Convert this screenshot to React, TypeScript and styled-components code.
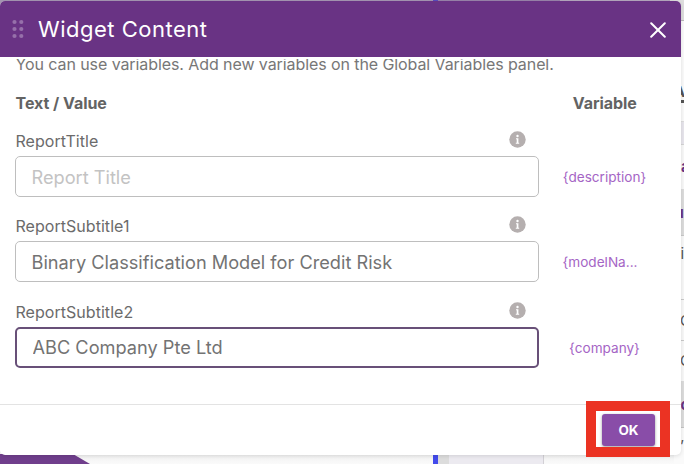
import React from "react";
import styled, { createGlobalStyle } from "styled-components";

const GlobalStyle = createGlobalStyle`
  * { box-sizing: border-box; }
  body { margin: 0; background: #fff; font-family: Inter, "Liberation Sans", sans-serif; overflow: hidden; }
`;

const Page = styled.div`
  position: relative;
  width: 684px;
  height: 464px;
  overflow: hidden;
`;

const Backdrop = styled.div`
  display: flex;
  flex-direction: column;
  justify-content: space-between;
  height: 100%;
  background: #fafafa;
`;

const TopEdge = styled.div`
  height: 12px;
  background: linear-gradient(90deg, #a697b3 0 433px, #5a4cc0 433px 438px, #9a84ab 438px 560px, #b5a8bf 560px 670px, #d8d8d8 670px);
`;

const BottomEdge = styled.div`
  display: flex;
  height: 10px;
  background: linear-gradient(#f1f1f1, #fafafa);
`;

const Shape = styled.svg`
  display: block;
  width: 433px;
  height: 10px;
`;

const Segment = styled.div<{ $w: number; $c: string }>`
  width: ${(p) => p.$w}px;
  background: ${(p) => p.$c};
`;

const SidePanel = styled.div`
  position: absolute;
  top: 0;
  right: 0;
  width: 10px;
  height: 464px;
  display: flex;
  flex-direction: column;
`;

const SideCell = styled.div<{ $h: number; $bg: string; $fg?: string; $bold?: boolean; $line?: string; $left?: number; $top?: number; $under?: boolean }>`
  height: ${(p) => p.$h}px;
  flex: none;
  display: flex;
  align-items: center;
  padding-left: ${(p) => p.$left ?? 7}px;
  padding-top: ${(p) => p.$top ?? 0}px;
  overflow: hidden;
  white-space: nowrap;
  background: ${(p) => p.$bg};
  color: ${(p) => p.$fg ?? "#555"};
  font-size: 15px;
  font-weight: ${(p) => (p.$bold ? 700 : 400)};
  text-decoration: ${(p) => (p.$under ? "underline 3px" : "none")};
  text-underline-offset: 3px;
  text-decoration-skip-ink: none;
  border-bottom: 1px solid ${(p) => p.$line ?? "transparent"};
`;

const Dialog = styled.section`
  position: absolute;
  top: 1px;
  left: 0;
  width: 681px;
  height: 454px;
  display: flex;
  flex-direction: column;
  background: #fff;
  border-radius: 5px;
  overflow: hidden;
  box-shadow: 0 1px 4px rgba(0, 0, 0, 0.12);
`;

const Header = styled.header`
  height: 56px;
  flex: none;
  display: flex;
  align-items: center;
  padding: 0 15px 0 12px;
  background: #693384;
  color: #fff;
`;

const Grip = styled.svg`
  width: 12px;
  height: 20px;
`;

const Title = styled.h1`
  flex: 1;
  margin: 0 0 0 14px;
  font-size: 22px;
  font-weight: 400;
  line-height: 28px;
  letter-spacing: 0.5px;
`;

const CloseButton = styled.button`
  width: 16px;
  height: 16px;
  padding: 0;
  margin-top: 2px;
  border: 0;
  background: none;
  svg { display: block; }
`;

const Body = styled.main`
  height: 345px;
  flex: none;
  margin-top: 2px;
  overflow: hidden;
  padding-left: 15px;
`;

const Hint = styled.p`
  margin: -6px 0 0 0.5px;
  height: 22px;
  font-size: 16px;
  line-height: 22px;
  letter-spacing: -0.085px;
  color: #777;
  white-space: nowrap;
`;

const Columns = styled.div`
  display: grid;
  grid-template-columns: 523px 133px;
`;

const HeadRow = styled(Columns)`
  margin: 17px 0 16px;
  height: 22px;
  font-size: 16px;
  font-weight: 700;
  line-height: 23px;
  letter-spacing: -0.05px;
  color: #636363;
`;

const HeadCell = styled.span<{ $center?: boolean }>`
  padding-left: 0.5px;
  text-align: ${(p) => (p.$center ? "center" : "left")};
`;

const FieldRow = styled(Columns)`
  height: 85.3px;
  align-content: start;
`;

const LabelLine = styled.div`
  height: 26px;
  display: flex;
  justify-content: space-between;
  align-items: flex-start;
  padding: 0 12px 0 0.5px;
`;

const Label = styled.label`
  font-size: 16px;
  line-height: 22px;
  letter-spacing: 0.04px;
  color: #6b6b6b;
`;

const InfoIcon = styled.svg`
  width: 17px;
  height: 17px;
  margin-top: 1px;
`;

const Field = styled.input<{ $active?: boolean }>`
  grid-column: 1;
  width: 524px;
  height: 41px;
  padding: 0 15.5px;
  border: ${(p) => (p.$active ? "2px solid #685078" : "1px solid #bebebe")};
  border-radius: 5px;
  outline: 0;
  background: #fff;
  color: #737373;
  font: 400 18.2px Inter, sans-serif;
  &::placeholder { color: #c3c3c3; opacity: 1; }
`;

const Variable = styled.span<{ $shift?: number }>`
  grid-column: 2;
  height: 41px;
  line-height: 43px;
  padding-right: ${(p) => p.$shift ?? 0}px;
  text-align: center;
  font-size: 13.6px;
  color: #a565c5;
`;

const Footer = styled.footer`
  flex: 1;
  display: flex;
  justify-content: flex-end;
  align-items: flex-start;
  padding: 9px 26px 0 0;
  border-top: 1px solid #e3e3e3;
`;

const OkButton = styled.button`
  width: 53px;
  height: 32px;
  padding: 0;
  border: 0;
  border-radius: 3px;
  background: #894da8;
  color: #fff;
  font: 700 13.5px Inter, sans-serif;
  box-shadow: 0 1px 3px rgba(0, 0, 0, 0.4);
`;

const Highlight = styled.div`
  position: absolute;
  left: 586px;
  top: 401px;
  width: 84px;
  height: 56px;
  border: 10px solid #eb3323;
`;

const rows = [
  { label: "ReportTitle", placeholder: "Report Title", value: "", variable: "{description}", shift: 0 },
  { label: "ReportSubtitle1", value: "Binary Classification Model for Credit Risk", variable: "{modelNa...", shift: 9 },
  { label: "ReportSubtitle2", value: "ABC Company Pte Ltd", variable: "{company}", active: true, shift: 0 },
];

function Info() {
  return (
    <InfoIcon viewBox="0 0 17 17">
      <circle cx="8.5" cy="8.5" r="8.2" fill="#b5afaf" />
      <circle cx="8.5" cy="5" r="1.2" fill="#fff" />
      <path d="M7 7.2h2.4v4.5h.8v1.1H6.8v-1.1h.9V8.3H7z" fill="#fff" />
    </InfoIcon>
  );
}

export default function App() {
  return (
    <>
      <GlobalStyle />
      <Page>
        <Backdrop>
          <TopEdge />
          <BottomEdge>
            <Shape viewBox="0 0 433 10">
              <path d="M0 0h73l17 10H0z" fill="#703e8c" />
            </Shape>
            <Segment $w={5} $c="#434bec" />
            <Segment $w={11} $c="#dcdcdc" />
            <Segment $w={94} $c="#eceaf0" />
            <Segment $w={1} $c="#d2d0d5" />
          </BottomEdge>
        </Backdrop>
        <SidePanel>
          <SideCell $h={21} $bg="#dedede" $line="#bbb" />
          <SideCell $h={101} $bg="#fafafa" $bold $under $left={0} $top={40} $line="#ddd">A</SideCell>
          <SideCell $h={23} $bg="#e7e5ec" $line="#d4d4d4" />
          <SideCell $h={44} $bg="#f8f8f8" $fg="#693384" $bold $left={7}>a</SideCell>
          <SideCell $h={47} $bg="#dcdcdc" $fg="#693384" $bold $left={0.5} $line="#c8c8c8">u</SideCell>
          <SideCell $h={36} $bg="#f8f8f8" $left={6.5}>ic</SideCell>
          <SideCell $h={28} $bg="#f8f8f8" $line="#c9c9c9" />
          <SideCell $h={41} $bg="#f8f8f8" $line="#c9c9c9" $left={6}>C</SideCell>
          <SideCell $h={40} $bg="#f8f8f8" $left={6}>C</SideCell>
          <SideCell $h={47} $bg="#dcdcdc" $fg="#693384" $bold $left={6.5} $line="#c4c4c4">c</SideCell>
          <SideCell $h={36} $bg="#fafafa" $left={6}>’</SideCell>
        </SidePanel>
        <Dialog>
          <Header>
            <Grip viewBox="0 0 12 20">
              {[3, 10, 17].map((y) => (
                <g key={y} fill="#9670aa">
                  <circle cx="2.5" cy={y} r="2.1" />
                  <circle cx="9.3" cy={y} r="2.1" />
                </g>
              ))}
            </Grip>
            <Title>Widget Content</Title>
            <CloseButton aria-label="Close">
              <svg width="16" height="16" viewBox="0 0 16 16">
                <path d="M1.2 1.2l13.6 13.6M14.8 1.2L1.2 14.8" stroke="#fff" strokeWidth="2" strokeLinecap="round" />
              </svg>
            </CloseButton>
          </Header>
          <Body>
            <Hint>You can use variables. Add new variables on the Global Variables panel.</Hint>
            <HeadRow>
              <HeadCell>Text / Value</HeadCell>
              <HeadCell $center>Variable</HeadCell>
            </HeadRow>
            {rows.map((r) => (
              <FieldRow key={r.label}>
                <LabelLine>
                  <Label>{r.label}</Label>
                  <Info />
                </LabelLine>
                <Field $active={r.active} placeholder={r.placeholder} defaultValue={r.value} />
                <Variable $shift={r.shift}>{r.variable}</Variable>
              </FieldRow>
            ))}
          </Body>
          <Footer>
            <OkButton>OK</OkButton>
          </Footer>
        </Dialog>
        <Highlight />
      </Page>
    </>
  );
}
